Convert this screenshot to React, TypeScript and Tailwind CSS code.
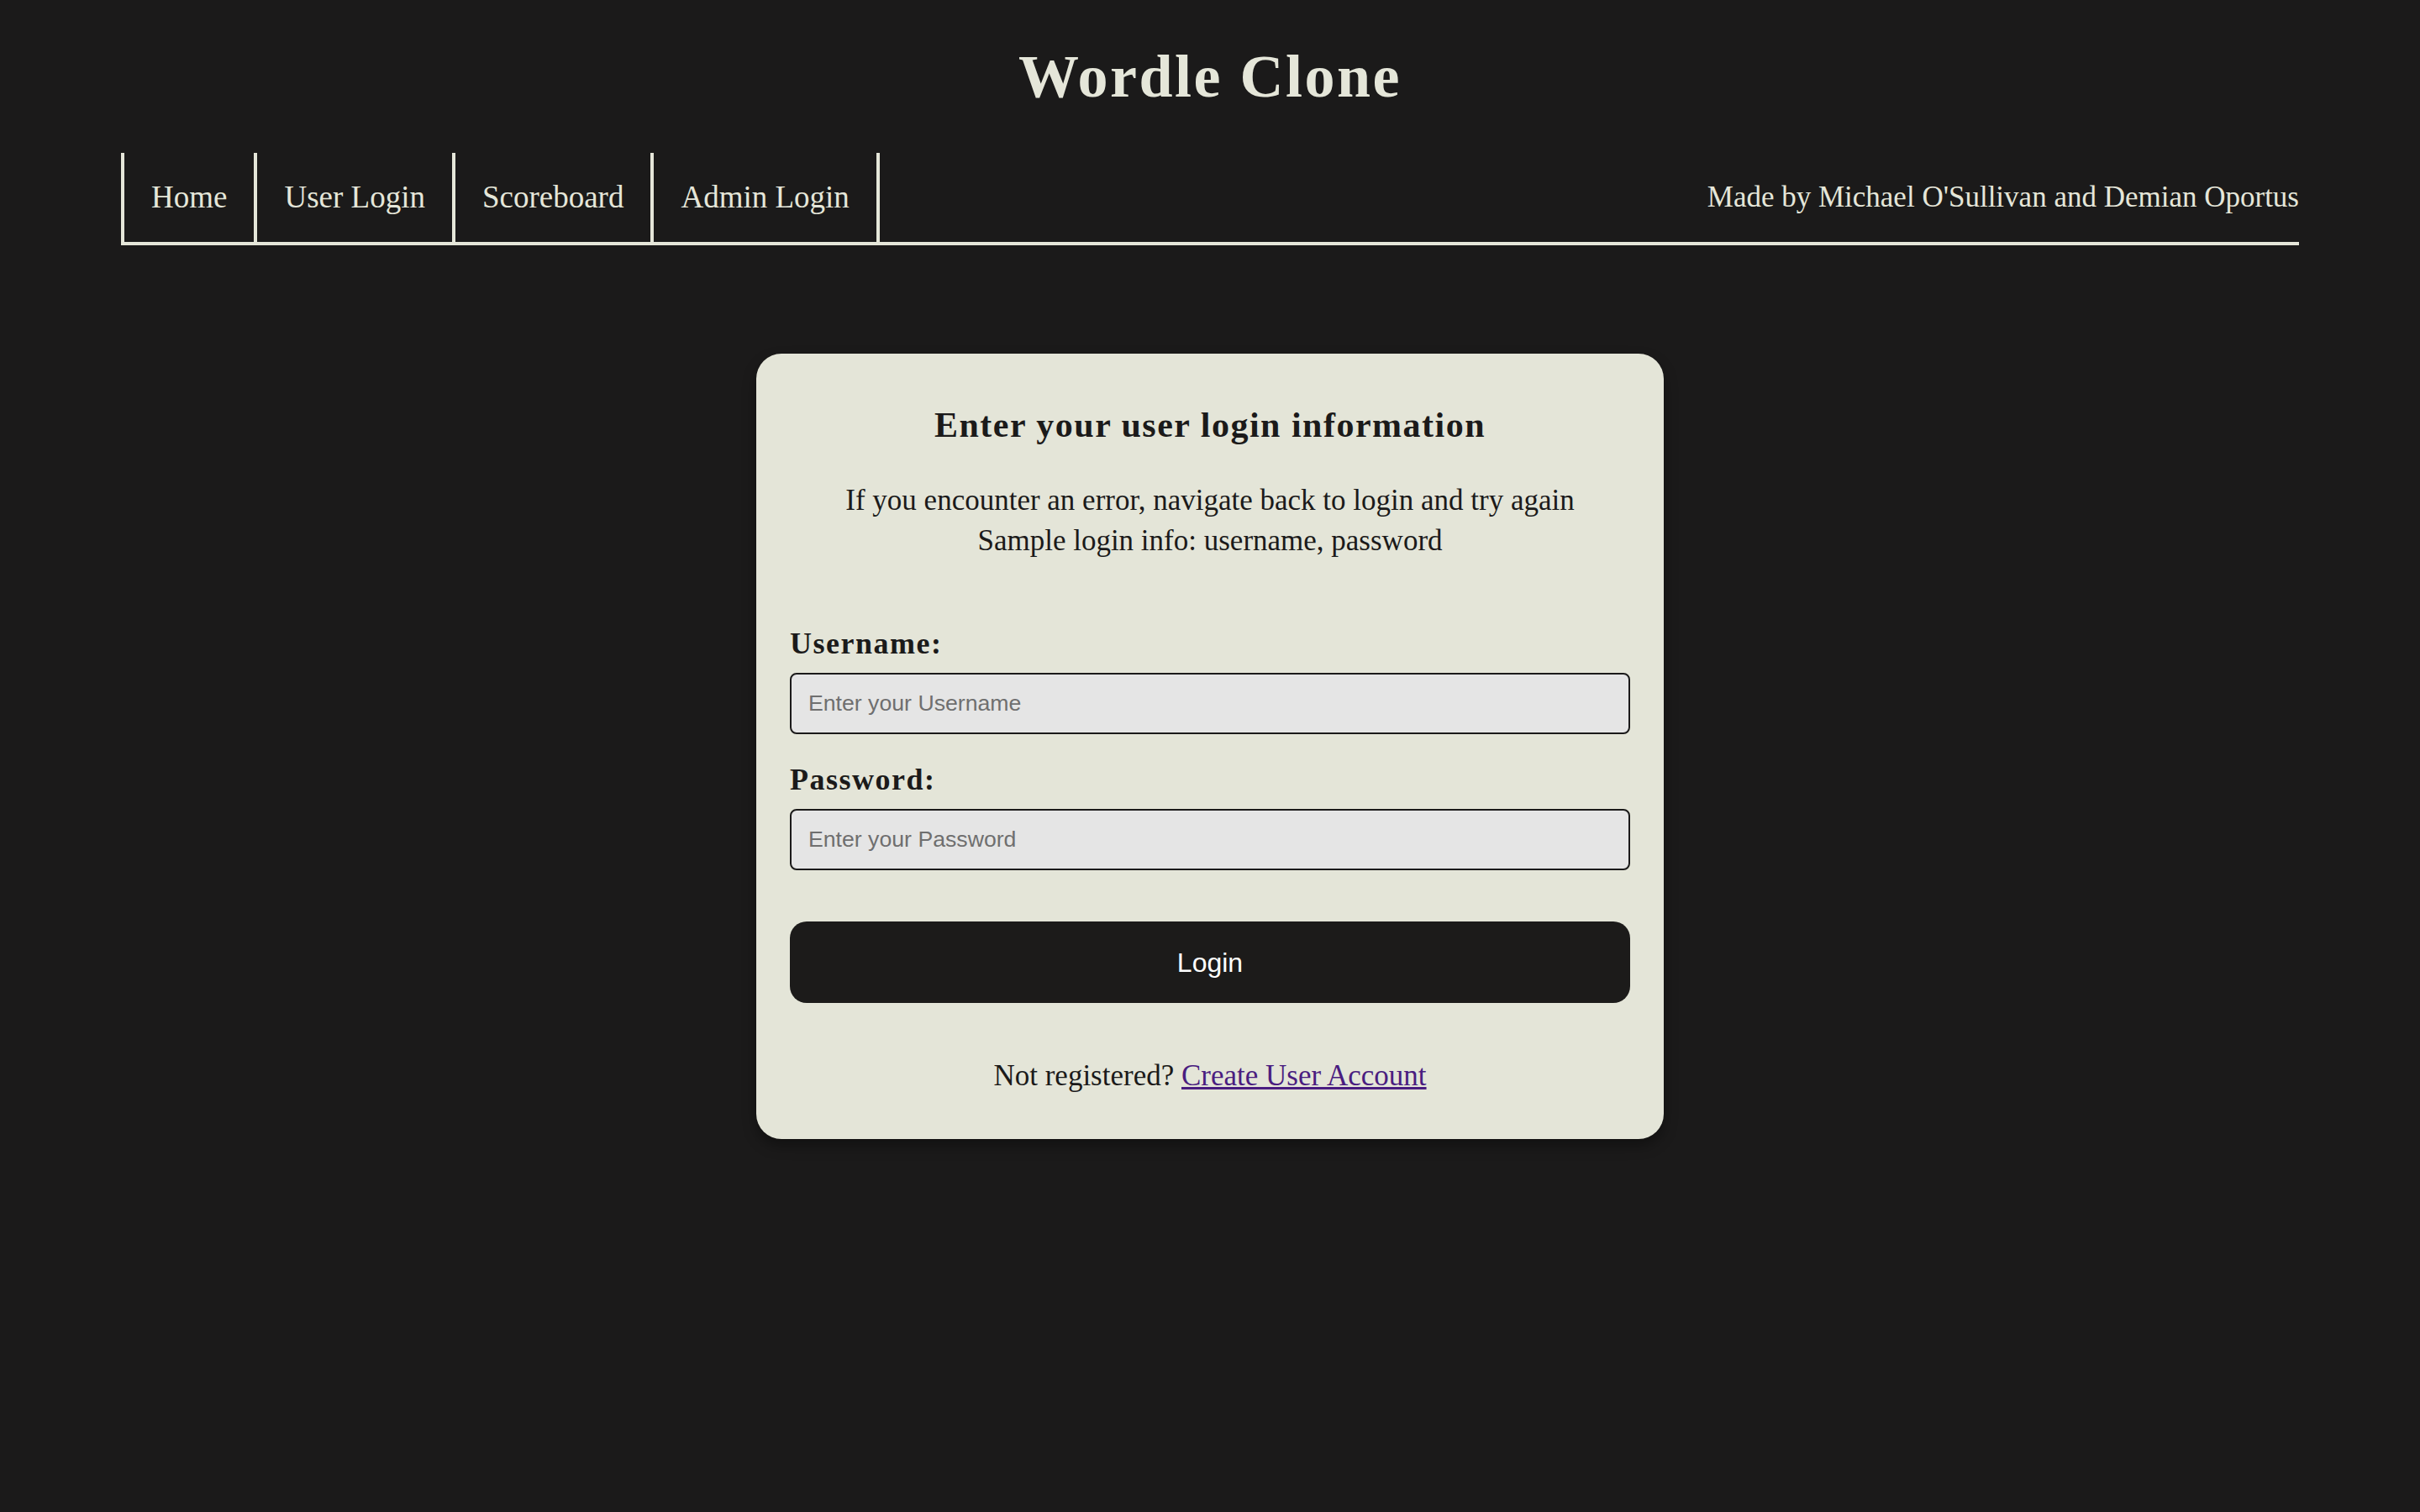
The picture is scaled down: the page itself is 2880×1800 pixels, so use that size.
import React from 'react';

const navLinks = ['Home', 'User Login', 'Scoreboard', 'Admin Login'];

const serif = "font-['Liberation_Serif',Georgia,serif]";
const sans = "font-['Liberation_Sans',Arial,sans-serif]";

const Header: React.FC = () => (
  <header>
    <h1 className={`${serif} text-center text-[72px] leading-[74px] font-bold tracking-[2.5px] text-[#e5e6d9] pt-[54px]`}>
      Wordle Clone
    </h1>
    <nav className="w-[90%] mx-auto mt-[54px] flex items-stretch border-b-4 border-[#e5e6d9]">
      <ul className="flex">
        {navLinks.map((link, i) => (
          <li
            key={link}
            className={`h-[106px] flex items-center px-8 border-l-4 border-[#e5e6d9] ${i === navLinks.length - 1 ? 'border-r-4' : ''}`}
          >
            <a href="#" className={`${serif} text-[37px] leading-[44px] text-[#e5e6d9]`}>
              {link}
            </a>
          </li>
        ))}
      </ul>
      <p className={`${serif} ml-auto self-center text-[35px] leading-[40px] text-[#e5e6d9]`}>
        Made by Michael O'Sullivan and Demian Oportus
      </p>
    </nav>
  </header>
);

const Field: React.FC<{ label: string; placeholder: string; type: string; first?: boolean }> = ({ label, placeholder, type, first }) => (
  <div className={first ? 'mt-[78px]' : 'mt-[34px]'}>
    <label className={`${serif} block text-[36px] leading-[40px] font-bold tracking-[1.5px] text-[#1b1a1a]`}>{label}</label>
    <input
      type={type}
      placeholder={placeholder}
      className={`${sans} mt-[15px] block w-full h-[73px] px-[20px] text-[26.67px] bg-[#e5e5e5] border-2 border-[#1b1a1a] rounded-[8px] text-[#1b1a1a] placeholder:text-[#6f6f6f] outline-none`}
    />
  </div>
);

const LoginCard: React.FC = () => (
  <div className="w-[1080px] mx-auto mt-[129px] bg-[#e4e5d8] rounded-[30px] px-[40px] pt-[40px] pb-[55px] shadow-[0_8px_16px_rgba(0,0,0,0.35)]">
    <h3 className={`${serif} mt-[23px] text-center text-[42px] leading-[44px] font-bold tracking-[1.5px] text-[#1b1a1a]`}>
      Enter your user login information
    </h3>
    <p className={`${serif} mt-[44px] text-center text-[35px] leading-[48px] text-[#1b1a1a]`}>
      If you encounter an error, navigate back to login and try again
      <br />
      Sample login info: username, password
    </p>
    <form onSubmit={e => e.preventDefault()}>
      <Field label="Username:" placeholder="Enter your Username" type="text" first />
      <Field label="Password:" placeholder="Enter your Password" type="password" />
      <button
        type="submit"
        className={`${sans} mt-[61px] block w-full h-[97px] rounded-[20px] bg-[#1c1b1a] text-white text-[32px]`}
      >
        Login
      </button>
    </form>
    <p className={`${serif} mt-[67px] text-center text-[35px] leading-[40px] text-[#1b1a1a]`}>
      Not registered?{' '}
      <a href="#" className="text-[#4a1d80] underline">
        Create User Account
      </a>
    </p>
  </div>
);

export default function App() {
  return (
    <div className="min-h-screen bg-[#1b1a1a] pb-[100px]">
      <Header />
      <LoginCard />
    </div>
  );
}
